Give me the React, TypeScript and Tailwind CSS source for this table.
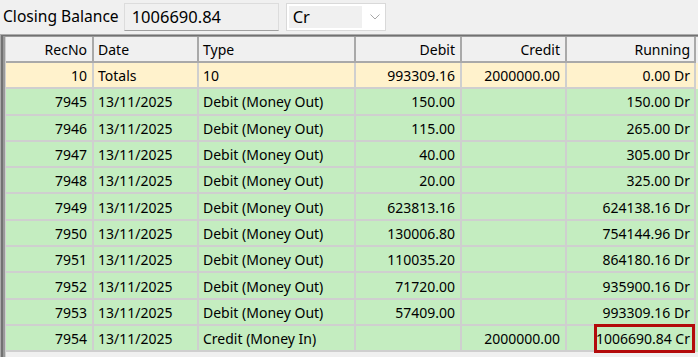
import React from "react"

const cols = [
  { key: "rec", label: "RecNo", w: "w-[88px]", right: true },
  { key: "date", label: "Date", w: "w-[105px]", right: false },
  { key: "type", label: "Type", w: "w-[157px]", right: false },
  { key: "debit", label: "Debit", w: "w-[106px]", right: true },
  { key: "credit", label: "Credit", w: "w-[105px]", right: true },
  { key: "run", label: "Running", w: "w-[129px]", right: true },
]

const rows = [
  ["7945", "13/11/2025", "Debit (Money Out)", "150.00", "", "150.00 Dr"],
  ["7946", "13/11/2025", "Debit (Money Out)", "115.00", "", "265.00 Dr"],
  ["7947", "13/11/2025", "Debit (Money Out)", "40.00", "", "305.00 Dr"],
  ["7948", "13/11/2025", "Debit (Money Out)", "20.00", "", "325.00 Dr"],
  ["7949", "13/11/2025", "Debit (Money Out)", "623813.16", "", "624138.16 Dr"],
  ["7950", "13/11/2025", "Debit (Money Out)", "130006.80", "", "754144.96 Dr"],
  ["7951", "13/11/2025", "Debit (Money Out)", "110035.20", "", "864180.16 Dr"],
  ["7952", "13/11/2025", "Debit (Money Out)", "71720.00", "", "935900.16 Dr"],
  ["7953", "13/11/2025", "Debit (Money Out)", "57409.00", "", "993309.16 Dr"],
  ["7954", "13/11/2025", "Credit (Money In)", "", "2000000.00", "1006690.84 Cr"],
]

const totals = ["10", "Totals", "10", "993309.16", "2000000.00", "0.00 Dr"]

function Cell({ i, text, header, last }: { i: number; text: string; header?: boolean; last?: boolean }) {
  const c = cols[i]
  const marked = last && i === 5
  return (
    <div
      className={`${c.w} shrink-0 flex items-center pt-[2px] border-r-2 border-b-2 ${header ? "border-[#a9a9a9]" : "border-[#cfcfcf]"} ${c.right ? (i === 5 ? "justify-end pr-[4px]" : "justify-end pr-[5px]") : "pl-[4px]"} ${marked ? "relative" : ""}`}
    >
      <span className="whitespace-nowrap">{text}</span>
      {marked && (
        <div className="absolute left-[27px] right-[-1px] top-[-2px] bottom-[-3px] border-[3px] border-[#b30b0b]" />
      )}
    </div>
  )
}

export default function App() {
  return (
    <div className="w-[698px] h-[357px] overflow-hidden bg-[#f0f0f0] text-black font-['Noto_Sans',sans-serif] text-[14px] leading-none">
      <div className="h-[34px] flex items-center">
        <span className="ml-[3px] text-[15.6px]">Closing Balance</span>
        <div className="ml-[5px] w-[155px] h-[28px] flex items-center pl-[7px] text-[16.5px] bg-[#f0f0f0] border border-[#dcdcdc] border-b-[#a0a0a0]">
          1006690.84
        </div>
        <div className="ml-[7px] w-[100px] h-[28px] flex items-center bg-white border border-[#d9d9d9] p-[2px]">
          <div className="w-[73px] h-full bg-[#f0f0f0] flex items-center pl-[4px] text-[16.5px]">Cr</div>
          <svg className="ml-[8px]" width="10" height="6" viewBox="0 0 10 6">
            <path d="M0.5 0.5 L5 5 L9.5 0.5" fill="none" stroke="#a8a8a8" strokeWidth="1" />
          </svg>
        </div>
      </div>
      <div className="border-l border-t border-[#acacac] h-[323px]">
        <div className="border-l-2 border-t border-[#727272] h-full">
          <div className="border-l-2 border-t border-[#9a9a9a] h-full">
            <div className="border-l border-[#cfcfcf] h-full">
              <div className="flex h-[26px] bg-[#f0f0f0]">
                {cols.map((c, i) => (
                  <Cell key={c.key} i={i} text={c.label} header />
                ))}
              </div>
              <div className="flex h-[26.3px] bg-[#fff2cc]">
                {totals.map((t, i) => (
                  <Cell key={i} i={i} text={t} />
                ))}
              </div>
              {rows.map((r, ri) => (
                <div key={r[0]} className="flex h-[26.3px] bg-[#c4edc0]">
                  {r.map((t, i) => (
                    <Cell key={i} i={i} text={t} last={ri === rows.length - 1} />
                  ))}
                </div>
              ))}
            </div>
          </div>
        </div>
      </div>
    </div>
  )
}
